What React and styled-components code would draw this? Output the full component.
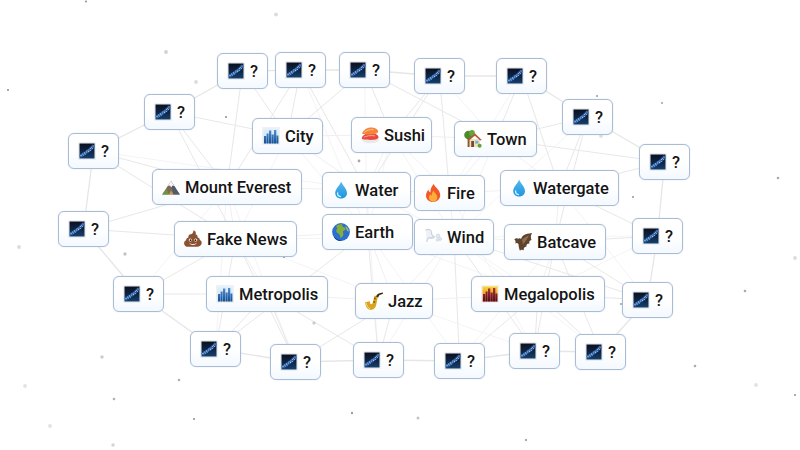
import React from 'react';
import styled, {createGlobalStyle} from 'styled-components';

const GlobalStyle = createGlobalStyle`
    html, body {
        margin: 0;
        padding: 0;
        background: #fff;
    }
`

const SPECKS = [
    [3, 13.5, 0.7], [4.5, 12, 0.6], [5.5, 13, 0.5], [6.5, 11, 0.7], [7.5, 12, 0.5], [8.5, 10, 0.6], [9, 8.8, 0.5],
    [10.5, 9.5, 0.7], [11, 8, 0.6], [12.5, 8.5, 0.5], [12.5, 6.5, 0.6], [13.5, 5.5, 0.5], [14.5, 6.5, 0.5], [15, 4, 0.6],
]

const StarChart = () => (
    <svg width="18" height="18" viewBox="0 0 18 18">
        <defs>
            <linearGradient id="nightSky" x1="0" y1="0" x2="0" y2="1">
                <stop offset="0" stopColor="#0a1020" />
                <stop offset="0.5" stopColor="#0f2442" />
                <stop offset="1" stopColor="#14406e" />
            </linearGradient>
        </defs>
        <rect width="18" height="18" rx="1.5" fill="#eceff2" />
        <rect x="1.5" y="1.5" width="15" height="15" fill="url(#nightSky)" />
        <path d="M2 14.5 L8 10.5 L12 7.5 L16 3.5" stroke="#3a74c4" strokeWidth="3.2" opacity="0.7" fill="none" />
        {SPECKS.map(([cx, cy, r]) => (
            <circle key={`${cx}-${cy}`} cx={cx} cy={cy} r={r} fill="#9cc4f4" />
        ))}
    </svg>
)

const Skyline = ({sky, sky2, tower, tower2, id}) => (
    <svg width="18" height="18" viewBox="0 0 18 18">
        <defs>
            <linearGradient id={id} x1="0" y1="0" x2="0" y2="1">
                <stop offset="0" stopColor={sky} />
                <stop offset="1" stopColor={sky2} />
            </linearGradient>
            <linearGradient id={`${id}Tower`} x1="0" y1="0" x2="0" y2="1">
                <stop offset="0" stopColor={tower} />
                <stop offset="1" stopColor={tower2} />
            </linearGradient>
        </defs>
        <rect width="18" height="18" fill="#eef2f5" />
        <rect x="1.5" y="1.5" width="15" height="15" fill={`url(#${id})`} />
        <path d="M2 16.5V9h2.2v7.5zM4.6 16.5V6.5h2v10zM7 16.5V3.5h2.3v13zM9.7 16.5V7.5h2v9zM12 16.5V3h2.3v13.500zM14.6 16.5V8.500h1.800v8z" fill={`url(#${id}Tower)`} />
    </svg>
)

const Sushi = () => (
    <svg width="18" height="18" viewBox="0 0 18 18">
        <ellipse cx="9.5" cy="13.8" rx="8.5" ry="3.5" fill="#e9e9e9" />
        <path d="M.8 11.8c1-3 5.2-4.8 8.5-4.8 4.3 0 7.8 1.6 8.2 4 .3 1.9-3.3 2.9-7.7 2.9-4.9 0-9.6-.2-9-2.1z" fill="#e9483a" />
        <path d="M1.2 7.5c.8-3.3 4.8-6 8.700-6 3.6 0 6.8 1.300 7.200 3.600.2 2-2.800 3.400-6.800 3.400-4.300 0-9.500-.1-9.100-1z" fill="#f5853a" />
        <path d="M3.2 6.5c1.900-2 5.500-3.400 9.300-2.900" stroke="#fcc48c" strokeWidth="1" fill="none" />
        <path d="M2.8 11.4c2.200-1.400 6.500-2.300 11.400-1.500" stroke="#f8a99d" strokeWidth="1" fill="none" />
    </svg>
)

const House = () => (
    <svg width="18" height="18" viewBox="0 0 18 18">
        <circle cx="4.5" cy="5" r="4.3" fill="#4c8a2c" />
        <circle cx="8" cy="3" r="2.9" fill="#66a53a" />
        <rect x="3.6" y="8" width="2" height="9" fill="#8a5a2c" />
        <rect x="6" y="9" width="10" height="8" fill="#f3dfb8" />
        <path d="M3.5 10 L10.8 3.2 L17.8 10 L16.2 10.6 L10.8 5.8 L5 10.6z" fill="#b0593a" />
        <rect x="7.2" y="11" width="2.8" height="6" fill="#7a4b2a" />
        <rect x="11.2" y="10.8" width="3.2" height="2.8" fill="#6cb4e4" />
        <circle cx="15.6" cy="15.8" r="2" fill="#5da438" />
    </svg>
)

const Drop = () => (
    <svg width="18" height="18" viewBox="0 0 18 18">
        <defs>
            <linearGradient id="dropFill" x1="0" y1="0" x2="0" y2="1">
                <stop offset="0" stopColor="#58b9ee" />
                <stop offset="1" stopColor="#1b95de" />
            </linearGradient>
        </defs>
        <path d="M9.2 .6c1.2 3.7 5.800 7.400 5.800 11.500 0 3.300-2.600 5.500-5.900 5.500S3.200 15.400 3.200 12.100c0-4.100 4.800-7.800 6-11.500z" fill="url(#dropFill)" />
        <path d="M5.6 11.800c-.2 2.200 1.100 3.600 2.900 3.900" stroke="#d0f0ff" strokeWidth="1.3" fill="none" strokeLinecap="round" />
    </svg>
)

const Flame = () => (
    <svg width="18" height="18" viewBox="0 0 18 18">
        <path d="M9.8 0c1 3.400 6.400 5.700 6.400 11.100 0 4.100-3.100 6.900-7.100 6.900s-7.100-2.700-7.100-6.600c0-2.400 1.300-4.300 2.500-5.600.2 1.300.9 2.200 1.900 2.600C6.200 5.200 7.700 2.300 9.800 0z" fill="#f4582a" />
        <path d="M9.5 6.500c.5 2.100 3.800 3.600 3.800 6.800 0 2.600-1.900 4.400-4.200 4.400s-4.200-1.700-4.200-4.100c0-1.600.9-2.700 1.700-3.400.2.800.7 1.300 1.200 1.500-.2-1.900.5-3.600 1.700-5.200z" fill="#fbae38" />
    </svg>
)

const Mountain = () => (
    <svg width="18" height="18" viewBox="0 0 18 18">
        <path d="M.2 16.5 L9 3 L17.8 16.5z" fill="#7d6a55" />
        <path d="M9 3 L17.8 16.5H11z" fill="#4f5a6a" />
        <path d="M5.8 8 L9 3 L12.4 8 L10.6 7.4 L9.3 9.2 L7.8 7.6z" fill="#f6f8fa" />
        <path d="M.2 16.5 L4.5 11 L7.3 16.5z" fill="#6d9440" />
        <path d="M7 16.5 L9 12.5 L11.8 16.5z" fill="#c79a54" />
    </svg>
)

const Poop = () => (
    <svg width="18" height="18" viewBox="0 0 18 18">
        <path d="M9.5 .3c2.300 1 2.800 2.600 2.100 3.900 1.600.4 2.300 1.800 1.900 3.100 1.500.4 2.400 1.600 2.300 2.800 1.400.4 2.100 1.800 1.900 3.100-.3 2.200-2.400 3.600-4.500 3.600H4.300C2.200 17 .3 15.600.1 13.400c-.1-1.400.7-2.700 2-3.100-.1-1.400.8-2.500 2.300-2.900-.3-1.600.7-3 2.300-3.100 .9-.1 2.700-.9 2.800-4z" fill="#8a5230" />
        <circle cx="6.3" cy="10" r="1.6" fill="#fff" />
        <circle cx="11.7" cy="10" r="1.6" fill="#fff" />
        <circle cx="6.5" cy="10.2" r="0.9" fill="#2b1a10" />
        <circle cx="11.5" cy="10.2" r="0.9" fill="#2b1a10" />
        <path d="M5.3 12.800c1.500 1.700 5.900 1.700 7.400 0-1 2.900-6.400 2.900-7.400 0z" fill="#fff" />
    </svg>
)

const Globe = () => (
    <svg width="18" height="18" viewBox="0 0 18 18">
        <circle cx="9" cy="9" r="8.9" fill="#2b6fd0" />
        <path d="M4.5 2.500c2-1 4-1.400 6-1-.5 1.200-.2 2 .6 2.400 1.600.1 2.700 1.200 2.300 2.700-.4.900-1.500 1-2.300 1.600-.5 1.400.8 2.400.2 3.900-.5 1.300-1.400 2-2.200 3-1-.5-1-2-1.300-3.200C7.200 10.500 5 10.300 4.400 8.800c-.4-1.300.2-2.400 1-3.200-.8-.9-1-1.800-.9-3.100z" fill="#86ad38" />
        <path d="M13.5 3c1.500 1 3 3 3.500 5.500-1.200.2-2-.8-2.500-2-.4-1-1.200-2-1-3.500z" fill="#b3bd4d" />
        <path d="M1.5 12.500c2 3.500 5.500 5.200 9 4.900-4 1.500-8-.5-9-4.900z" fill="#123a80" />
    </svg>
)

const Gust = () => (
    <svg width="18" height="18" viewBox="0 0 18 18">
        <path d="M1.5 2c3.200-1.500 5.800-.5 5.800 2.200 0 2.400 1 3.600 3 4.600-2 .9-4 1.300-6 1.100-1.500 2.200-1.700 3.200-1.500 4.300" stroke="#c9d3e0" strokeWidth="1.2" fill="#eef2f7" />
        <path d="M5 10c3 1 4.500 .5 6-1" stroke="#d5dde8" strokeWidth="1" fill="none" />
        <circle cx="14" cy="8" r="1.9" fill="#e4eaf1" stroke="#cbd5e1" strokeWidth="0.8" />
        <circle cx="16.2" cy="11" r="1.4" fill="#e4eaf1" stroke="#cbd5e1" strokeWidth="0.8" />
        <circle cx="13.5" cy="12" r="1.3" fill="#e4eaf1" stroke="#cbd5e1" strokeWidth="0.8" />
    </svg>
)

const Bat = () => (
    <svg width="18" height="18" viewBox="0 0 18 18">
        <path d="M17.5 0c-2.500 .6-6 .8-8.500 2.800-1 .8-1.400 2.300-2 3.300C6.400 5.200 5.500 5 4.800 5.800 3.300 5 1.500 5 .2 6.500c1.300 .5 1.600 2.100 1.300 4.200 1-1 2.200-.8 3 .6 .2 2.200.5 4.400 1.500 6.700 .8-1.500 2.200-1.300 3.700-.6-.3-2 .6-3.400 2.800-3.800-.4-1.800.7-3 3-3-.6-1.700 0-2.900 2-3.500-1-2.800-.8-4.800 .5-7.100z" fill="#5f432c" />
        <path d="M8 6.500c2-1.500 4-3 7-4.300-1 2.800-3.500 6-6 9.300z" fill="#8f6d4e" />
    </svg>
)

const Saxophone = () => (
    <svg width="18" height="18" viewBox="0 0 18 18">
        <path d="M9.5 3.500 L7.800 10.500c-.4 1.800-1.800 2-2.500 1.200-.3-.5-.1-1.300-.4-2.500L.2 10.200c.1 4.200 2.200 7.600 5.800 7.600 3.300 0 4.800-2.800 5.400-5.800l1.400-7.200z" fill="#d9a520" />
        <path d="M11 4.500C12 2 14 1.200 17.800 .6L18 1.800C15 2.700 13.800 3.200 13.200 5.500z" fill="#3a2a10" />
        <circle cx="10" cy="6.5" r="1.1" fill="#8a6410" />
        <circle cx="9.2" cy="10" r="1.1" fill="#8a6410" />
        <path d="M1.2 11c.4 2.500 1.600 4.700 3.800 5.700" stroke="#f6dc78" strokeWidth="1" fill="none" />
    </svg>
)

const ICONS = {
    star: <StarChart />,
    city: <Skyline id="cityFill" sky="#e4f0fa" sky2="#c9def0" tower="#4f8fd0" tower2="#174f94" />,
    metro: <Skyline id="metroFill" sky="#e4f0fa" sky2="#c9def0" tower="#4f8fd0" tower2="#174f94" />,
    mega: <Skyline id="megaFill" sky="#fbd72b" sky2="#e8642c" tower="#a8323a" tower2="#4d1028" />,
    sushi: <Sushi />,
    house: <House />,
    drop: <Drop />,
    flame: <Flame />,
    mountain: <Mountain />,
    poop: <Poop />,
    globe: <Globe />,
    gust: <Gust />,
    bat: <Bat />,
    sax: <Saxophone />,
}

const NODES = {
    a: {x: 68, y: 133}, b: {x: 144, y: 94}, c: {x: 217, y: 53}, d: {x: 275, y: 52},
    e: {x: 339, y: 52}, f: {x: 414, y: 58}, g: {x: 496, y: 58}, h: {x: 562, y: 99},
    i: {x: 639, y: 144}, j: {x: 632, y: 218}, k: {x: 622, y: 282}, l: {x: 575, y: 334},
    m: {x: 509, y: 333}, n: {x: 434, y: 343}, o: {x: 353, y: 342}, p: {x: 270, y: 344},
    q: {x: 190, y: 331}, r: {x: 113, y: 276}, s: {x: 58, y: 211},
    city: {x: 252, y: 118, w: 71, label: 'City', icon: 'city'},
    sushi: {x: 351, y: 117, w: 81, label: 'Sushi', icon: 'sushi'},
    town: {x: 454, y: 121, w: 83, label: 'Town', icon: 'house'},
    everest: {x: 152, y: 169, w: 150, label: 'Mount Everest', icon: 'mountain'},
    water: {x: 322, y: 172, w: 89, label: 'Water', icon: 'drop'},
    fire: {x: 414, y: 175, w: 71, label: 'Fire', icon: 'flame'},
    watergate: {x: 500, y: 170, w: 119, label: 'Watergate', icon: 'drop'},
    fake: {x: 174, y: 221, w: 123, label: 'Fake News', icon: 'poop'},
    earth: {x: 322, y: 214, w: 91, label: 'Earth', icon: 'globe'},
    wind: {x: 414, y: 219, w: 80, label: 'Wind', icon: 'gust'},
    batcave: {x: 504, y: 224, w: 102, label: 'Batcave', icon: 'bat'},
    metro: {x: 206, y: 276, w: 122, label: 'Metropolis', icon: 'metro'},
    jazz: {x: 355, y: 283, w: 78, label: 'Jazz', icon: 'sax'},
    mega: {x: 471, y: 276, w: 134, label: 'Megalopolis', icon: 'mega'},
}

const RING = `a-b b-c c-d d-e e-f f-g g-h h-i i-j j-k k-l l-m m-n n-o o-p p-q q-r r-s s-a`

const SPOKES = `b-everest b-city c-everest c-city d-city d-water d-everest e-city e-sushi e-town
f-sushi f-fire f-water g-town g-watergate h-town h-watergate h-batcave i-watergate i-town
j-batcave j-watergate k-batcave k-mega l-mega l-batcave m-mega m-batcave m-wind
n-wind n-mega o-jazz o-earth o-metro p-metro p-fake p-jazz
q-metro q-fake r-metro r-fake s-everest s-fake a-everest a-fake b-fake
city-sushi city-water sushi-water sushi-fire sushi-town town-fire town-watergate
everest-water everest-fake water-fire water-earth fire-watergate fire-wind
watergate-batcave fake-earth fake-metro earth-wind earth-jazz wind-batcave wind-jazz
batcave-mega metro-jazz jazz-mega k-wind q-earth`

// the very faint ones that fill up the middle
const FAINT = `d-earth e-water f-town g-fire h-wind j-mega j-wind k-watergate l-wind m-fire m-jazz
n-earth n-batcave o-water o-wind p-everest q-everest r-everest a-water city-fake city-earth
sushi-earth sushi-wind water-wind fake-jazz fake-wind wind-mega earth-mega town-wind`

const parseEdges = text => text.trim().split(/\s+/).map(pair => pair.split('-'))

const RING_EDGES = parseEdges(RING)
const SPOKE_EDGES = parseEdges(SPOKES)
const FAINT_EDGES = parseEdges(FAINT)

const DOTS = [
    [86, 1.5, 1.1, '#9a9a9a'], [276, 14.5, 1.9, '#dcdcdc'], [166, 52, 1.9, '#d2d2d2'], [196, 82, 1.9, '#dcdcdc'],
    [8, 90, 1, '#8a8a8a'], [226, 117, 1, '#8a8a8a'], [359, 161, 1.4, '#a8a8a8'], [597, 96, 1, '#9a9a9a'],
    [662, 103, 1.1, '#a8a8a8'], [601, 136, 1.9, '#e0e0e0'], [633, 197, 0.9, '#8a8a8a'], [778, 178, 1.3, '#aaaaaa'],
    [19, 247, 1.9, '#dcdcdc'], [125, 254, 1.7, '#c4c4c4'], [284, 257, 1, '#8a8a8a'], [314, 323, 1.7, '#cfcfcf'],
    [102, 357, 1.7, '#cccccc'], [25, 386, 1.9, '#e2e2e2'], [179, 380, 1.3, '#b0b0b0'], [114, 399, 1.3, '#b0b0b0'],
    [50, 426, 1.9, '#e2e2e2'], [113, 445, 1.7, '#d4d4d4'], [194, 419, 1, '#8a8a8a'], [352, 413, 1.2, '#a0a0a0'],
    [795, 258, 1.9, '#dcdcdc'], [745, 291, 1.3, '#aaaaaa'], [621, 304, 1, '#9a9a9a'], [695, 366, 1.3, '#aaaaaa'],
    [756, 385, 1.9, '#e2e2e2'], [795, 395, 1.1, '#9a9a9a'], [418, 418, 1.5, '#c4c4c4'], [526, 440, 1.2, '#a8a8a8'],
]

const center = n => ({
    x: n.x + (n.w || 51) / 2,
    y: n.y + 18,
})

const Edge = ({from, to, stroke, width}) => {
    const p1 = center(NODES[from])
    const p2 = center(NODES[to])
    return <line x1={p1.x} y1={p1.y} x2={p2.x} y2={p2.y} stroke={stroke} strokeWidth={width} />
}

const App = () => {
    return (
        <Canvas>
            <GlobalStyle />
            <Backdrop viewBox="0 0 800 450">
                {FAINT_EDGES.map(([from, to]) => (
                    <Edge key={from + to} from={from} to={to} stroke="#f4f4f4" width={1} />
                ))}
                {SPOKE_EDGES.map(([from, to]) => (
                    <Edge key={from + to} from={from} to={to} stroke={from.length === 1 ? '#e8e8e8' : '#f0f0f0'} width={1} />
                ))}
                {RING_EDGES.map(([from, to]) => (
                    <Edge key={from + to} from={from} to={to} stroke="#e6e6e6" width={1.3} />
                ))}
                {DOTS.map(([cx, cy, r, fill]) => (
                    <circle key={`${cx}-${cy}`} cx={cx} cy={cy} r={r} fill={fill} />
                ))}
            </Backdrop>
            {Object.entries(NODES).map(([id, node]) => (
                <Item key={id} $x={node.x} $y={node.y} $w={node.w || 51}>
                    <IconSlot>{ICONS[node.icon || 'star']}</IconSlot>
                    <Label>{node.label || '?'}</Label>
                </Item>
            ))}
        </Canvas>
    )
}

export default App

const Canvas = styled.div`
    position: relative;
    width: 800px;
    height: 450px;
    overflow: hidden;
    background: #fff;
    font-family: Roboto, "Liberation Sans", sans-serif;
`

const Backdrop = styled.svg`
    position: absolute;
    top: 0;
    left: 0;
    width: 800px;
    height: 450px;
`

const Item = styled.div`
    position: absolute;
    left: ${props => props.$x}px;
    top: ${props => props.$y}px;
    width: ${props => props.$w}px;
    height: 36px;
    box-sizing: border-box;
    display: flex;
    align-items: center;
    gap: 5px;
    padding: 0 9px;
    background: linear-gradient(180deg, #ffffff 50%, #f3f9ff 100%);
    border: 1px solid #a8bcd6;
    border-radius: 6px;
    box-shadow: 0 0 1px rgba(168, 188, 214, 0.9);
    white-space: nowrap;
`

const IconSlot = styled.span`
    display: flex;
    width: 18px;
    height: 18px;
    flex: none;
`

const Label = styled.span`
    font-size: 16.5px;
    font-weight: 500;
    line-height: 20px;
    margin-top: 1px;
    color: #141414;
`
